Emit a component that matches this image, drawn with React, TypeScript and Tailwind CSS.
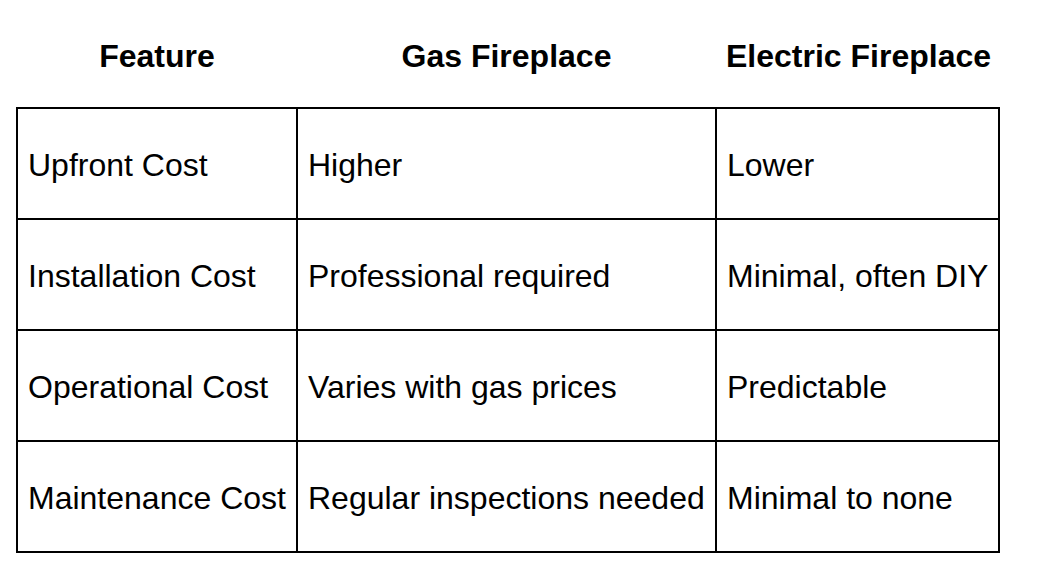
const rows = [
  ["Upfront Cost", "Higher", "Lower"],
  ["Installation Cost", "Professional required", "Minimal, often DIY"],
  ["Operational Cost", "Varies with gas prices", "Predictable"],
  ["Maintenance Cost", "Regular inspections needed", "Minimal to none"],
];

export default function App() {
  return (
    <div
      className="min-h-screen bg-white text-black pl-[16px]"
      style={{ fontFamily: '"Liberation Sans", Arial, Helvetica, sans-serif' }}
    >
      <table className="table-fixed border-collapse w-[982px] text-[32px] leading-[37px]">
        <colgroup>
          <col className="w-[280px]" />
          <col className="w-[419px]" />
          <col className="w-[283px]" />
        </colgroup>
        <thead>
          <tr className="h-[108px]">
            <th className="font-bold text-center align-middle px-[10px] pt-[6px]">Feature</th>
            <th className="font-bold text-center align-middle px-[10px] pt-[6px]">Gas Fireplace</th>
            <th className="font-bold text-center align-middle px-[10px] pt-[6px] whitespace-nowrap">
              Electric Fireplace
            </th>
          </tr>
        </thead>
        <tbody>
          {rows.map((row) => (
            <tr key={row[0]} className="h-[111px]">
              {row.map((cell, i) => (
                <td
                  key={i}
                  className="border-2 border-black px-[10px] pt-[4px] align-middle text-left whitespace-nowrap"
                >
                  {cell}
                </td>
              ))}
            </tr>
          ))}
        </tbody>
      </table>
    </div>
  );
}
